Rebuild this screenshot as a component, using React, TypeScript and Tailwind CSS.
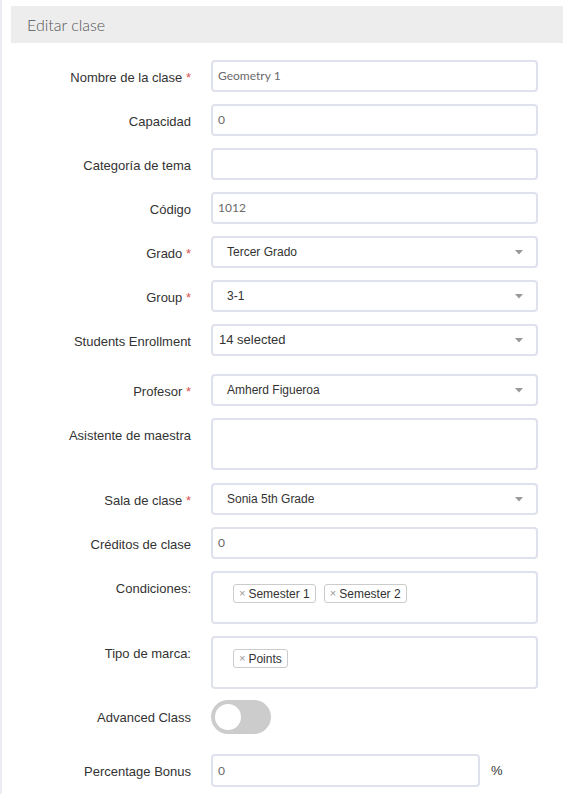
import React from "react";

const labelFont = { fontFamily: '"Liberation Sans", Arial, sans-serif' };
const latoFont = { fontFamily: 'Lato, "Open Sans", sans-serif' };

interface RowProps {
  label: string;
  required?: boolean;
  className?: string;
  children: React.ReactNode;
}

const Row: React.FC<RowProps> = ({ label, required, className, children }) => (
  <div className={`flex items-start ${className ?? ""}`}>
    <div
      className="w-[189px] shrink-0 pt-[10px] text-right text-[13px] leading-[16px] text-[#333]"
      style={labelFont}
    >
      {label}
      {required && <span className="text-[#d9534f]"> *</span>}
    </div>
    <div className="ml-[20px] flex items-center">{children}</div>
  </div>
);

const TextBox = ({ value, h = "h-[32px]", w = "w-[327px]" }: { value?: string; h?: string; w?: string }) => (
  <div
    className={`${w} ${h} flex items-center rounded-[4px] border-2 border-[#dfe1ed] bg-white pl-[5px] text-[12px] text-[#6a6a6a]`}
    style={latoFont}
  >
    {value}
  </div>
);

const Select = ({ value, tight }: { value: string; tight?: boolean }) => (
  <div
    className={`w-[327px] h-[32px] flex items-center justify-between rounded-[4px] border-2 border-[#dfe1ed] bg-white pr-[13px] text-[#333] ${
      tight ? "pl-[6px] text-[13px]" : "pl-[14px] text-[12px]"
    }`}
    style={labelFont}
  >
    <span>{value}</span>
    <svg width="8" height="5" viewBox="0 0 8 5">
      <path d="M0 0 L8 0 L4 4.5 Z" fill="#999" />
    </svg>
  </div>
);

const Tag = ({ text }: { text: string }) => (
  <div
    className="h-[19px] flex items-center gap-[3px] rounded-[3px] border border-[#ccc] bg-white px-[5px] text-[12px] text-[#333]"
    style={labelFont}
  >
    <span className="text-[#999] text-[11px]">×</span>
    <span>{text}</span>
  </div>
);

const TagBox = ({ tags }: { tags: string[] }) => (
  <div className="w-[327px] h-[53px] rounded-[4px] border-2 border-[#dfe1ed] bg-white pl-[20px] pt-[11px]">
    <div className="flex gap-[8px]">
      {tags.map((t) => (
        <Tag key={t} text={t} />
      ))}
    </div>
  </div>
);

export default function App() {
  return (
    <div className="min-h-screen border-l-2 border-[#ebebf2] bg-white">
      <div className="pt-[6px] pl-[9px] pr-[8px]">
        <div
          className="h-[37px] flex items-center bg-[#ededed] pl-[16px] text-[16px] font-light text-[#555]"
          style={latoFont}
        >
          Editar clase
        </div>
      </div>

      <div className="mt-[17px] flex flex-col">
        <Row label="Nombre de la clase" required>
          <TextBox value="Geometry 1" />
        </Row>
        <Row label="Capacidad" className="mt-[12px]">
          <TextBox value="0" />
        </Row>
        <Row label="Categoría de tema" className="mt-[12px]">
          <TextBox />
        </Row>
        <Row label="Código" className="mt-[12px]">
          <TextBox value="1012" />
        </Row>
        <Row label="Grado" required className="mt-[12px]">
          <Select value="Tercer Grado" />
        </Row>
        <Row label="Group" required className="mt-[12px]">
          <Select value="3-1" />
        </Row>
        <Row label="Students Enrollment" className="mt-[12px]">
          <Select value="14 selected" tight />
        </Row>
        <Row label="Profesor" required className="mt-[18px]">
          <Select value="Amherd Figueroa" />
        </Row>
        <Row label="Asistente de maestra" className="mt-[12px]">
          <TextBox h="h-[52px]" />
        </Row>
        <Row label="Sala de clase" required className="mt-[13px]">
          <Select value="Sonia 5th Grade" />
        </Row>
        <Row label="Créditos de clase" className="mt-[12px]">
          <TextBox value="0" />
        </Row>
        <Row label="Condiciones:" className="mt-[12px]">
          <TagBox tags={["Semester 1", "Semester 2"]} />
        </Row>
        <Row label="Tipo de marca:" className="mt-[12px]">
          <TagBox tags={["Points"]} />
        </Row>
        <Row label="Advanced Class" className="mt-[11px]">
          <div className="w-[60px] h-[34px] rounded-full bg-[#ccc] flex items-center pl-[4px]">
            <div className="w-[26px] h-[26px] rounded-full bg-white" />
          </div>
        </Row>
        <Row label="Percentage Bonus" className="mt-[20px]">
          <TextBox value="0" h="h-[33px]" w="w-[269px]" />
          <span className="ml-[11px] text-[13px] text-[#333]" style={labelFont}>
            %
          </span>
        </Row>
      </div>
    </div>
  );
}
